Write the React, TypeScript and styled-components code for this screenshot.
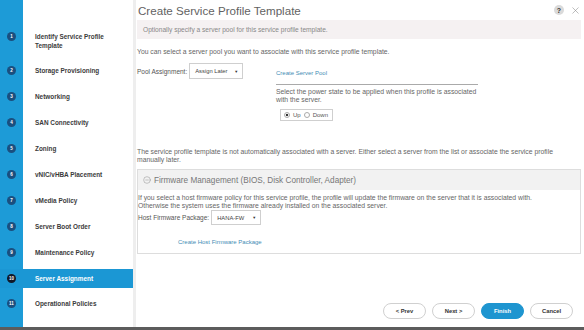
import React from "react";
import styled, { createGlobalStyle } from "styled-components";
import { X, CircleMinus } from "lucide-react";

const steps = [
  "Identify Service Profile Template",
  "Storage Provisioning",
  "Networking",
  "SAN Connectivity",
  "Zoning",
  "vNIC/vHBA Placement",
  "vMedia Policy",
  "Server Boot Order",
  "Maintenance Policy",
  "Server Assignment",
  "Operational Policies",
];
const ACTIVE = 10;

const GlobalStyle = createGlobalStyle`
    html, body {
      margin: 0;
      padding: 0;
      background: #fff;
    }
    body {
      font-family: "Liberation Sans", Arial, sans-serif;
    }
    * {
      box-sizing: border-box;
    }
  `,
  Shell = styled.div`
    display: flex;
    width: 584px;
    height: 330px;
    border-bottom: 3px solid #5c5c5c;
    overflow: hidden;
  `,
  Nav = styled.nav`
    width: 136px;
    flex-shrink: 0;
    display: flex;
    flex-direction: column;
    gap: 6.9px;
    padding-top: 26.5px;
    background: linear-gradient(to right, #1d9bd7 0 23px, #fff 23px);
    border-right: 3px solid #eeeeee;
  `,
  StepRow = styled.div<{ $active?: boolean }>`
    display: grid;
    grid-template-columns: 23px 1fr;
    align-items: start;
    padding: 5px 0;
    background: ${(p) => (p.$active ? "#1b97d4" : "transparent")};
  `,
  Badge = styled.span<{ $active?: boolean }>`
    justify-self: center;
    width: 9px;
    height: 9px;
    border-radius: 50%;
    display: flex;
    align-items: center;
    justify-content: center;
    background: ${(p) => (p.$active ? "#111827" : "#1a4f7f")};
    color: #fff;
    font-size: 4.5px;
    font-weight: bold;
  `,
  StepLabel = styled.span<{ $active?: boolean }>`
    padding-left: 12px;
    padding-right: 18px;
    font-size: 6.4px;
    line-height: 9px;
    font-weight: bold;
    color: ${(p) => (p.$active ? "#fff" : "#3b3b3b")};
  `,
  Main = styled.main`
    flex: 1;
    display: flex;
    flex-direction: column;
    padding: 0 3px 8px 1px;
    min-width: 0;
  `,
  Header = styled.header`
    height: 20px;
    display: flex;
    align-items: center;
    justify-content: space-between;
  `,
  Title = styled.h1`
    margin: 0;
    padding-left: 1px;
    font-size: 11.6px;
    font-weight: normal;
    color: #626262;
  `,
  Tools = styled.div`
    display: flex;
    align-items: center;
    gap: 6px;
    color: #888;
  `,
  Help = styled.span`
    width: 10px;
    height: 10px;
    border-radius: 50%;
    background: #dadada;
    color: #333;
    font-size: 7px;
    font-weight: bold;
    display: flex;
    align-items: center;
    justify-content: center;
  `,
  InfoBar = styled.div`
    height: 19px;
    display: flex;
    align-items: center;
    padding-left: 6px;
    background: #f5f1f2;
    color: #888;
    font-size: 6.6px;
  `,
  Text = styled.p<{ $gap?: number }>`
    margin: ${(p) => p.$gap ?? 0}px 0 0;
    font-size: 6.8px;
    line-height: 8px;
    color: #666;
    white-space: nowrap;
  `,
  PoolRow = styled.div`
    display: flex;
    margin-top: 7px;
  `,
  FieldGroup = styled.div<{ $width?: number }>`
    width: ${(p) => (p.$width ? `${p.$width}px` : "auto")};
    display: flex;
    align-items: center;
    gap: 2px;
    font-size: 6.5px;
    color: #555;
    align-self: flex-start;
  `,
  Select = styled.div<{ $width: number; $height: number }>`
    width: ${(p) => p.$width}px;
    height: ${(p) => p.$height}px;
    border: 1px solid #cfcfcf;
    background: #fff;
    display: flex;
    align-items: center;
    justify-content: space-between;
    padding: 0 4px 0 5px;
    font-size: 5.8px;
    color: #444;
    &::after {
      content: "▼";
      font-size: 4px;
      color: #333;
    }
  `,
  PowerCol = styled.div`
    flex: 1;
    padding-top: 6px;
  `,
  Link = styled.a<{ $indent?: number; $gap?: number }>`
    display: block;
    margin-top: ${(p) => p.$gap ?? 0}px;
    padding-left: ${(p) => p.$indent ?? 0}px;
    color: #3f8db5;
    font-size: 6px;
    line-height: 8px;
    text-decoration: none;
  `,
  Rule = styled.hr`
    width: 202px;
    margin: 7px 0 0;
    border: 0;
    border-top: 1px solid #aaa;
  `,
  RadioBox = styled.div`
    display: inline-flex;
    align-items: center;
    gap: 3px;
    height: 12px;
    margin: 1px 0 0 4px;
    padding: 0 4px 0 3px;
    border: 1px solid #cfcfcf;
    font-size: 6px;
    color: #555;
  `,
  Radio = styled.span<{ $checked?: boolean }>`
    width: 6px;
    height: 6px;
    border-radius: 50%;
    border: 1px solid #aaa;
    background: ${(p) =>
      p.$checked ? "radial-gradient(circle, #333 0 1.3px, #fff 1.6px)" : "#fff"};
  `,
  Panel = styled.section`
    margin-top: 5px;
    height: 85px;
    border: 1px solid #dddddd;
  `,
  PanelHeader = styled.div`
    height: 20px;
    display: flex;
    align-items: center;
    gap: 3px;
    padding-left: 5px;
    background: #f2f2f2;
    color: #777;
    font-size: 8.2px;
  `,
  PanelBody = styled.div`
    padding: 4px 0 0 0;
  `,
  ButtonBar = styled.div`
    margin-top: auto;
    display: flex;
    justify-content: flex-end;
    gap: 6px;
    padding-right: 8px;
  `,
  Button = styled.button<{ $primary?: boolean }>`
    width: 43px;
    height: 16px;
    border-radius: 8px;
    border: 1px solid ${(p) => (p.$primary ? "#1e95d0" : "#d0d0d0")};
    background: ${(p) => (p.$primary ? "#1e95d0" : "#fff")};
    color: ${(p) => (p.$primary ? "#fff" : "#333")};
    font-family: inherit;
    font-size: 5.8px;
    font-weight: bold;
    padding: 0;
  `;

const App: React.FC = () => (
  <Shell>
    <GlobalStyle />
    <Nav>
      {steps.map((label, i) => (
        <StepRow key={label} $active={i + 1 === ACTIVE}>
          <Badge $active={i + 1 === ACTIVE}>{i + 1}</Badge>
          <StepLabel $active={i + 1 === ACTIVE}>{label}</StepLabel>
        </StepRow>
      ))}
    </Nav>
    <Main>
      <Header>
        <Title>Create Service Profile Template</Title>
        <Tools>
          <Help>?</Help>
          <X size={11} strokeWidth={1.2} />
        </Tools>
      </Header>
      <InfoBar>
        Optionally specify a server pool for this service profile template.
      </InfoBar>
      <Text $gap={9}>
        You can select a server pool you want to associate with this service
        profile template.
      </Text>
      <PoolRow>
        <FieldGroup $width={139}>
          Pool Assignment:
          <Select $width={54} $height={16}>Assign Later</Select>
        </FieldGroup>
        <PowerCol>
          <Link>Create Server Pool</Link>
          <Rule />
          <Text $gap={3}>
            Select the power state to be applied when this profile is associated
            <br />
            with the server.
          </Text>
          <RadioBox>
            <Radio $checked />
            Up
            <Radio />
            Down
          </RadioBox>
        </PowerCol>
      </PoolRow>
      <Text $gap={26}>
        The service profile template is not automatically associated with a
        server. Either select a server from the list or associate the service
        profile
        <br />
        manually later.
      </Text>
      <Panel>
        <PanelHeader>
          <CircleMinus size={8} strokeWidth={1.4} color="#888" />
          Firmware Management (BIOS, Disk Controller, Adapter)
        </PanelHeader>
        <PanelBody>
          <Text>
            If you select a host firmware policy for this service profile, the
            profile will update the firmware on the server that it is associated
            with.
            <br />
            Otherwise the system uses the firmware already installed on the
            associated server.
          </Text>
          <FieldGroup>
            Host Firmware Package:
            <Select $width={50} $height={15}>HANA-FW</Select>
          </FieldGroup>
          <Link $indent={40} $gap={13}>
            Create Host Firmware Package
          </Link>
        </PanelBody>
      </Panel>
      <ButtonBar>
        <Button>&lt; Prev</Button>
        <Button>Next &gt;</Button>
        <Button $primary>Finish</Button>
        <Button>Cancel</Button>
      </ButtonBar>
    </Main>
  </Shell>
);

export default App;
